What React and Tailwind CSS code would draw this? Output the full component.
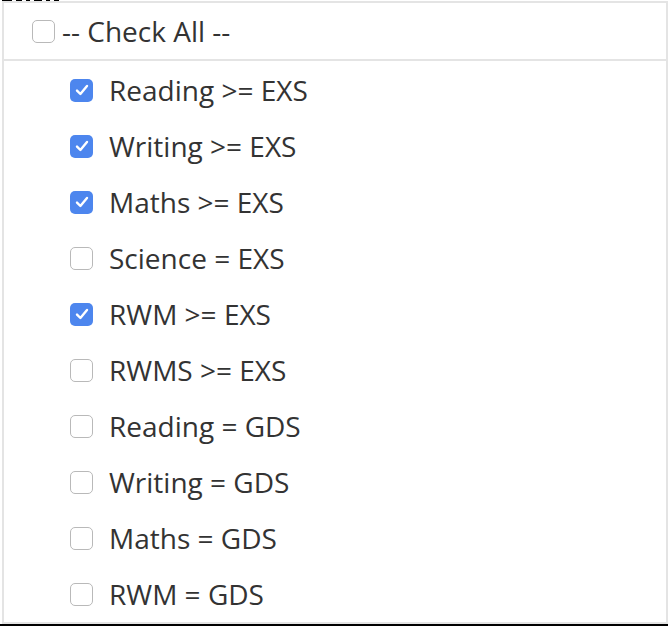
import React, { useState } from 'react';

const items = [
  { label: 'Reading >= EXS', checked: true },
  { label: 'Writing >= EXS', checked: true },
  { label: 'Maths >= EXS', checked: true },
  { label: 'Science = EXS', checked: false },
  { label: 'RWM >= EXS', checked: true },
  { label: 'RWMS >= EXS', checked: false },
  { label: 'Reading = GDS', checked: false },
  { label: 'Writing = GDS', checked: false },
  { label: 'Maths = GDS', checked: false },
  { label: 'RWM = GDS', checked: false },
];

// case à cocher façon navigateur
const Box = ({ checked, onClick }) => (
  <span
    onClick={onClick}
    className={
      checked
        ? 'flex items-center justify-center w-[23px] h-[23px] rounded-[5px] bg-[#4d86ee] shrink-0'
        : 'flex items-center justify-center w-[23px] h-[23px] rounded-[5px] border border-[#b9b9b9] bg-white shrink-0'
    }
  >
    {checked && (
      <svg width="16" height="16" viewBox="0 0 16 16" fill="none">
        <path d="M3 8.6 L6.4 12 L13 4" stroke="white" strokeWidth="2.4" strokeLinecap="round" strokeLinejoin="round" />
      </svg>
    )}
  </span>
);

export default function App() {
  const [values, setValues] = useState(items.map((i) => i.checked));
  const allChecked = values.every(Boolean);

  const toggle = (idx) => {
    setValues(values.map((v, i) => (i === idx ? !v : v)));
  };

  return (
    <div
      className="w-[668px] h-[626px] bg-white overflow-hidden"
      style={{ fontFamily: '"Open Sans", "Liberation Sans", sans-serif' }}
    >
      {/* bas du titre coupé au-dessus */}
      <div className="h-[1px] flex gap-[4px] pl-[2px]">
        <span className="w-[10px] bg-black" />
        <span className="w-[6px] bg-black" />
        <span className="w-[4px] bg-black" />
        <span className="w-[8px] bg-black" />
        <span className="w-[4px] bg-black" />
        <span className="w-[5px] bg-black" />
      </div>

      <div className="ml-[2px] w-[666px] h-[623px] border-2 border-[#e4e4e4] flex flex-col">
        <div className="h-[58px] shrink-0 border-b-2 border-[#e4e4e4] flex items-center pl-[28px]">
          <Box checked={allChecked} onClick={() => setValues(values.map(() => !allChecked))} />
          <span className="ml-[7px] text-[28px] text-[#333]">-- Check All --</span>
        </div>

        <div className="pt-[1px]">
          {items.map((item, idx) => (
            <div key={item.label} className="h-[56px] flex items-center pl-[66px]">
              <Box checked={values[idx]} onClick={() => toggle(idx)} />
              <span className="ml-[16px] text-[28px] text-[#333]">{item.label}</span>
            </div>
          ))}
        </div>
      </div>

      <div className="h-[2px] bg-black" />
    </div>
  );
}
